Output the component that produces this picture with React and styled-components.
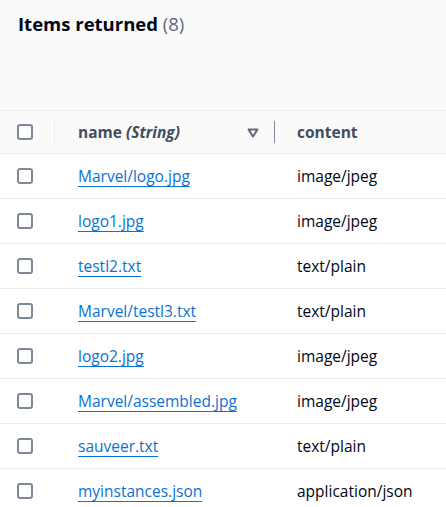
import React from 'react';
import styled, { createGlobalStyle } from 'styled-components';

const GlobalStyle = createGlobalStyle`
  html, body {
    margin: 0;
    padding: 0;
    background: #ffffff;
  }
  body {
    font-family: 'Open Sans', 'Liberation Sans', sans-serif;
    color: #000716;
  }
`;

const Panel = styled.div`
  width: 446px;
  height: 507px;
  overflow: hidden;
  background: #ffffff;
`;

const TitleBar = styled.div`
  height: 111px;
  box-sizing: border-box;
  padding: 10px 18px 0;
  background: #fafafa;
  border-bottom: 1px solid #e9ebed;
`;

const Title = styled.h2`
  margin: 0;
  font-size: 18.5px;
  font-weight: 700;
  line-height: 28px;
  color: #000716;

  & > span {
    font-weight: 400;
    color: #5f6b7a;
  }
`;

const Row = styled.div`
  display: grid;
  grid-template-columns: 55px 220px 1fr;
  align-items: center;
  height: ${p => (p.$head ? '42px' : '44px')};
  border-bottom: 1px solid #e9ebed;
  background: ${p => (p.$head ? '#fafafa' : '#ffffff')};
`;

const Cell = styled.div`
  display: flex;
  align-items: center;
  height: 100%;
  box-sizing: border-box;
  padding-left: ${p => p.$pad}px;
  font-size: 15.5px;
  white-space: nowrap;
`;

const HeadCell = styled(Cell)`
  position: relative;
  font-size: 15.5px;
  font-weight: 700;
  color: #414d5c;
  justify-content: ${p => (p.$spread ? 'space-between' : 'flex-start')};
  padding-right: ${p => (p.$spread ? '16px' : '0')};

  &::after {
    content: '';
    position: absolute;
    right: 0;
    top: 10px;
    bottom: 10px;
    width: 1px;
    background: ${p => p.$line || 'transparent'};
  }

  & em {
    font-style: italic;
  }
`;

const Checkbox = styled.span`
  width: 16px;
  height: 16px;
  box-sizing: border-box;
  border: 2px solid #7d8998;
  border-radius: 3px;
  background: #ffffff;
  margin-left: 17px;
`;

const CheckCell = styled.div`
  position: relative;
  display: flex;
  align-items: center;
  height: 100%;

  &::after {
    content: '';
    position: absolute;
    right: 0;
    top: 10px;
    bottom: 10px;
    width: 1px;
    background: ${p => (p.$head ? '#e9ebed' : 'transparent')};
  }
`;

const NameLink = styled.a`
  color: #0972d3;
  text-decoration: underline;
  text-decoration-thickness: 1px;
  text-underline-offset: 4px;
`;

const Content = styled.span`
  color: #000716;
`;

const SortIcon = () => (
  <svg width="12" height="10" viewBox="0 0 12 10" style={{ marginTop: 1 }}>
    <path d="M1.5 1.5h9L6 8.5z" fill="none" stroke="#5f6b7a" strokeWidth="2" strokeLinejoin="round" />
  </svg>
);

const items = [
  ['Marvel/logo.jpg', 'image/jpeg'],
  ['logo1.jpg', 'image/jpeg'],
  ['testl2.txt', 'text/plain'],
  ['Marvel/testl3.txt', 'text/plain'],
  ['logo2.jpg', 'image/jpeg'],
  ['Marvel/assembled.jpg', 'image/jpeg'],
  ['sauveer.txt', 'text/plain'],
  ['myinstances.json', 'application/json'],
];

export default function App() {
  return (
    <Panel>
      <GlobalStyle />
      <TitleBar>
        <Title>
          Items returned <span>(8)</span>
        </Title>
      </TitleBar>
      <Row $head>
        <CheckCell $head>
          <Checkbox />
        </CheckCell>
        <HeadCell $pad={23} $spread $line="#7d8998">
          <span>
            name <em>(String)</em>
          </span>
          <SortIcon />
        </HeadCell>
        <HeadCell $pad={22}>content</HeadCell>
      </Row>
      {items.map(([name, type]) => (
        <Row key={name}>
          <CheckCell>
            <Checkbox />
          </CheckCell>
          <Cell $pad={23}>
            <NameLink href="#">{name}</NameLink>
          </Cell>
          <Cell $pad={22}>
            <Content>{type}</Content>
          </Cell>
        </Row>
      ))}
    </Panel>
  );
}
